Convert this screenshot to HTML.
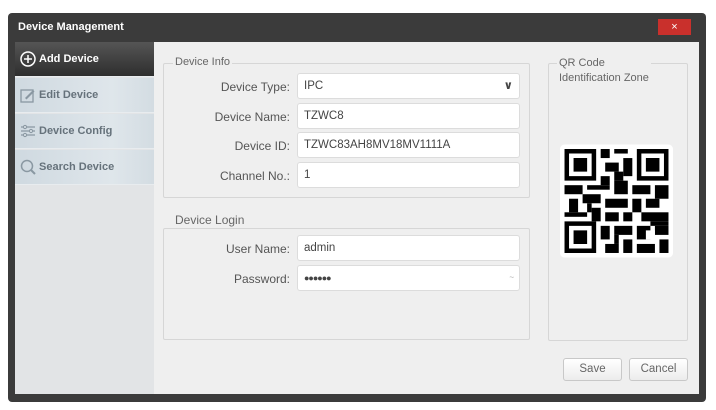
<!DOCTYPE html>
<html><head><meta charset="utf-8"><style>
*{margin:0;padding:0;box-sizing:border-box}
body{width:716px;height:410px;background:#fff;font-family:"Liberation Sans","DejaVu Sans",sans-serif;position:relative;overflow:hidden}
.win{position:absolute;left:8px;top:13px;width:698px;height:389px;background:#3b3b3b;border-radius:4px}
.title{position:absolute;left:10px;top:8px;color:#fff;font-weight:bold;font-size:11px}
.close{position:absolute;left:650px;top:6px;width:33px;height:16px;background:#c9302c;color:#fff;font-size:11px;text-align:center;line-height:16px}
.side{position:absolute;left:7px;top:29px;width:139px;height:352px;background:#e2e4e6}
.item{position:absolute;left:0;width:139px;height:35px;background:linear-gradient(90deg,#cfd9e0,#dfe6eb 70%,#d3dce2);color:#66727b;font-weight:bold;font-size:11px;line-height:35px;padding-left:24px;border-bottom:1px solid #e8ecef}
.item.act{background:linear-gradient(#555,#2e2e2e);color:#fff}
.ic{position:absolute;left:5px;top:9px;width:16px;height:16px}
.main{position:absolute;background:#efefef}
.box{position:absolute;border:1px solid #d6d6d6;border-radius:2px}
.leg{position:absolute;background:#efefef;color:#666;font-size:11px;padding:0 2px}
.lbl{position:absolute;width:130px;text-align:right;color:#555;font-size:12px}
.inp{position:absolute;left:297px;width:223px;height:26px;background:#fff;border:1px solid #dcdcdc;border-radius:3px;font-size:11.5px;color:#444;line-height:24px;padding-left:6px}
.btn{position:absolute;top:358px;width:59px;height:23px;background:linear-gradient(#fff,#ececec);border:1px solid #c8c8c8;border-radius:3px;font-size:11.5px;color:#666;text-align:center;line-height:21px}
</style></head><body>
<div class="win">
<div class="title">Device Management</div>
<div class="close">×</div>
<div class="side">
<div class="item act" style="top:0"><svg class="ic" viewBox="0 0 16 16"><circle cx="8" cy="8" r="7" fill="none" stroke="#fff" stroke-width="1.5"/><path d="M8 4v8M4 8h8" stroke="#fff" stroke-width="1.5"/></svg>Add Device</div>
<div class="item" style="top:36px"><svg class="ic" viewBox="0 0 16 16"><rect x="1" y="3" width="12" height="12" fill="none" stroke="#8a98a2" stroke-width="1.3"/><path d="M5 11l8-8 1.5 1.5-8 8z" fill="#8a98a2"/></svg>Edit Device</div>
<div class="item" style="top:72px"><svg class="ic" viewBox="0 0 16 16"><path d="M1 4h14M1 8h14M1 12h14" stroke="#8a98a2" stroke-width="1.2"/><circle cx="5" cy="4" r="1.6" fill="#d0d9df" stroke="#8a98a2"/><circle cx="11" cy="8" r="1.6" fill="#d0d9df" stroke="#8a98a2"/><circle cx="5" cy="12" r="1.6" fill="#d0d9df" stroke="#8a98a2"/></svg>Device Config</div>
<div class="item" style="top:108px"><svg class="ic" viewBox="0 0 16 16"><circle cx="7" cy="7" r="5.5" fill="none" stroke="#8a98a2" stroke-width="1.5"/><path d="M11 11l4 4" stroke="#8a98a2" stroke-width="2"/></svg>Search Device</div>
</div>
</div>
<div class="main" style="left:154px;top:42px;width:545px;height:352px"></div>
<div class="box" style="left:163px;top:63px;width:367px;height:135px"></div>
<div class="leg" style="left:173px;top:56px">Device Info</div>
<div class="box" style="left:163px;top:228px;width:367px;height:112px"></div>
<div class="leg" style="left:173px;top:213px;font-size:12px">Device Login</div>
<div class="box" style="left:548px;top:63px;width:140px;height:278px"></div>
<div class="leg" style="left:557px;top:56px;line-height:15px">QR Code<br>Identification Zone</div>
<div class="lbl" style="left:160px;top:80px">Device Type:</div>
<div class="inp" style="top:73px">IPC<span style="position:absolute;right:6px;top:0;font-weight:bold">&#8744;</span></div>
<div class="lbl" style="left:160px;top:110px">Device Name:</div>
<div class="inp" style="top:103px">TZWC8</div>
<div class="lbl" style="left:160px;top:139px">Device ID:</div>
<div class="inp" style="top:132px">TZWC83AH8MV18MV1111A</div>
<div class="lbl" style="left:160px;top:169px">Channel No.:</div>
<div class="inp" style="top:162px">1</div>
<div class="lbl" style="left:160px;top:242px">User Name:</div>
<div class="inp" style="top:235px">admin</div>
<div class="lbl" style="left:160px;top:272px">Password:</div>
<div class="inp" style="top:265px;font-size:9px;letter-spacing:-1px">●●●●●●<span style="position:absolute;right:6px;color:#aaa;font-size:8px">~</span></div>
<svg style="position:absolute;left:560px;top:143px" width="113" height="116" viewBox="0 0 25 25">
<rect width="25" height="25" fill="#fff" rx="1"/>
<g fill="#000">
<path d="M1 1h7v7h-7zM2 2v5h5v-5zM3 3h3v3h-3z" fill-rule="evenodd"/>
<path d="M17 1h7v7h-7zM18 2v5h5v-5zM19 3h3v3h-3z" fill-rule="evenodd"/>
<path d="M1 17h7v7h-7zM2 18v5h5v-5zM3 19h3v3h-3z" fill-rule="evenodd"/>
<rect x="9" y="1" width="2" height="2"/><rect x="12" y="1" width="3" height="1"/><rect x="10" y="4" width="3" height="2"/><rect x="14" y="3" width="2" height="4"/><rect x="9" y="7" width="2" height="2"/><rect x="12" y="6" width="2" height="2"/>
<rect x="1" y="9" width="4" height="2"/><rect x="6" y="9" width="5" height="1"/><rect x="12" y="8" width="3" height="3"/><rect x="16" y="9" width="4" height="2"/><rect x="21" y="9" width="3" height="3"/>
<rect x="2" y="12" width="2" height="3"/><rect x="5" y="11" width="4" height="2"/><rect x="10" y="12" width="5" height="2"/><rect x="16" y="12" width="2" height="3"/><rect x="19" y="12" width="3" height="2"/><rect x="6" y="13" width="1" height="2"/>
<rect x="1" y="15" width="5" height="1"/><rect x="7" y="14" width="2" height="3"/><rect x="10" y="15" width="3" height="2"/><rect x="14" y="15" width="2" height="2"/><rect x="18" y="15" width="6" height="2"/>
<rect x="9" y="18" width="2" height="3"/><rect x="12" y="18" width="4" height="2"/><rect x="17" y="18" width="3" height="3"/><rect x="21" y="18" width="3" height="2"/><rect x="20" y="17" width="4" height="1"/>
<rect x="10" y="22" width="3" height="2"/><rect x="14" y="21" width="2" height="3"/><rect x="17" y="22" width="4" height="2"/><rect x="22" y="21" width="2" height="3"/><rect x="19" y="19" width="2" height="2" fill="#fff"/><rect x="12" y="20" width="1" height="2"/>
</g></svg>
<div class="btn" style="left:563px">Save</div>
<div class="btn" style="left:629px">Cancel</div>
</body></html>
